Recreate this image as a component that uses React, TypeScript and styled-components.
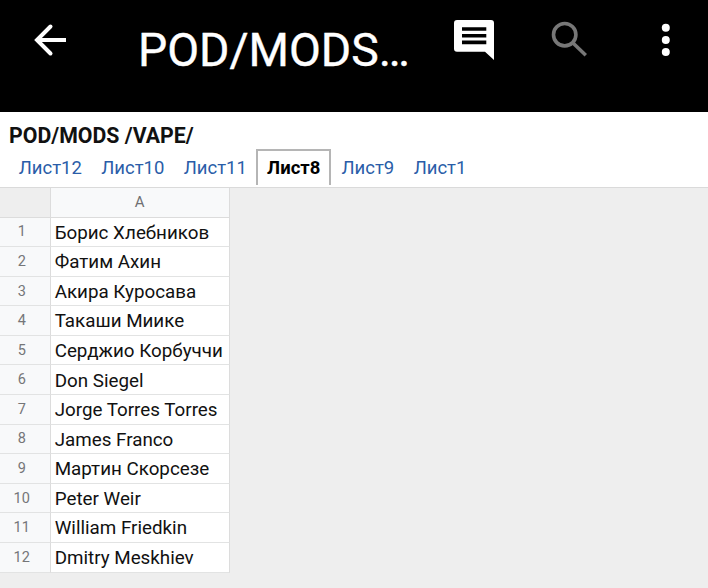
import React from "react";
import styled, { createGlobalStyle } from "styled-components";

const Global = createGlobalStyle`
  html, body { margin: 0; padding: 0; background: #fff; }
  body { font-family: Roboto, "Liberation Sans", sans-serif; }
`;
const Page = styled.div`
  width: 708px; height: 588px; overflow: hidden; display: flex; flex-direction: column; background: #eeeeee;
`;
const AppBar = styled.header`
  height: 112px; flex: none; background: #000; display: flex; align-items: flex-start; color: #fff;
`;
const IconSlot = styled.div<{ $w: number; $ml?: number }>`
  width: ${p => p.$w}px; margin-left: ${p => p.$ml ?? 0}px; height: 80px; flex: none;
  display: flex; align-items: center; justify-content: center;
`;
const Title = styled.h1`
  margin: 22px 0 0 38px; width: 316px; flex: none; font-size: 46.3px; font-weight: 400; line-height: 56px;
  white-space: nowrap; -webkit-text-stroke: 0.4px #fff;
`;
const DocHead = styled.div`
  background: #fff; flex: none; height: 76px; display: flex; flex-direction: column; border-bottom: 1px solid #dadada; box-sizing: border-box;
`;
const DocTitle = styled.div`
  font-size: 21.3px; font-weight: 700; color: #111; line-height: 24px; margin: 12px 0 0 9px;
`;
const Tabs = styled.div`
  display: flex; margin: 1px 0 0 9px; align-items: flex-start; height: 38px;
`;
const Tab = styled.div<{ $active?: boolean }>`
  height: 36px; box-sizing: border-box; padding: 1px 9.7px 0; display: flex; align-items: center; font-size: 18.5px;
  color: ${p => (p.$active ? "#000" : "#2a5da8")}; font-weight: ${p => (p.$active ? 700 : 400)};
  ${p => p.$active ? "border: 2px solid #b5b5b5; border-bottom: none; padding: 0 9px; margin: 0 0.5px 0 -0.5px;" : ""}
`;
const Sheet = styled.div`
  display: grid; grid-template-columns: 50.5px 179.5px; grid-auto-rows: 29.58px; width: 230px;
`;
const Corner = styled.div`
  background: #eeeeee; border-right: 1.5px solid #dcdcdc; border-bottom: 1.5px solid #dcdcdc;
`;
const ColHead = styled.div`
  background: #f8f9fa; color: #6f7072; font-size: 15px; display: flex; align-items: center; justify-content: center;
  border-right: 1px solid #dcdcdc; border-bottom: 1.5px solid #dcdcdc;
`;
const RowNum = styled.div`
  background: #f8f9fa; color: #757678; font-size: 14.5px; display: flex; align-items: center; justify-content: center;
  border-right: 1.5px solid #dcdcdc; border-bottom: 1.5px solid #e2e3e3; padding: 0 6px 0 0; box-sizing: border-box;
`;
const Cell = styled.div`
  background: #fff; color: #111; font-size: 18.8px; display: flex; align-items: center; padding: 1.5px 0 0 4.2px;
  border-right: 1px solid #dcdcdc; border-bottom: 1.5px solid #e2e3e3; white-space: nowrap; box-sizing: border-box; overflow: hidden;
`;

const tabs = ["Лист12", "Лист10", "Лист11", "Лист8", "Лист9", "Лист1"];
const names = ["Борис Хлебников", "Фатим Ахин", "Акира Куросава", "Такаши Миике", "Серджио Корбуччи", "Don Siegel", "Jorge Torres Torres", "James Franco", "Мартин Скорсезе", "Peter Weir", "William Friedkin", "Dmitry Meskhiev"];

export default function App() {
  return (
    <Page>
      <Global />
      <AppBar>
        <IconSlot $w={100}>
          <svg width="100" height="80" viewBox="0 0 100 80" fill="none" stroke="#fff" strokeWidth="4">
            <path d="M66 40H38" />
            <path d="M50.500 26.500 37 40 50.500 53.500" strokeLinecap="round" />
          </svg>
        </IconSlot>
        <Title>POD/MODS…</Title>
        <IconSlot $w={40}>
          <svg width="40" height="40" viewBox="454 20 40 40">
            <path fill="#fff" d="M457 20h34a3 3 0 0 1 3 3v37l-9-8.300h-28a3 3 0 0 1-3-3V23a3 3 0 0 1 3-3Z" />
            <path fill="#000" d="M462 27.300h24.300v3.400H462zM462 34h24.300v3.400H462zM462 40.600h24.300v3.700H462z" />
          </svg>
        </IconSlot>
        <IconSlot $w={36} $ml={57}>
          <svg width="36" height="38" viewBox="551 21 36 38" fill="none" stroke="#777" strokeWidth="3.6">
            <circle cx="564.700" cy="34.700" r="11.200" />
            <path d="m573 43 12.800 12.300" />
          </svg>
        </IconSlot>
        <IconSlot $w={10} $ml={74}>
          <svg width="10" height="36" viewBox="661 22 10 36" fill="#fff">
            <circle cx="665.800" cy="27.800" r="4" /><circle cx="665.800" cy="40" r="4" /><circle cx="665.800" cy="52" r="4" />
          </svg>
        </IconSlot>
      </AppBar>
      <DocHead>
        <DocTitle>POD/MODS /VAPE/</DocTitle>
        <Tabs>{tabs.map(t => <Tab key={t} $active={t === "Лист8"}>{t}</Tab>)}</Tabs>
      </DocHead>
      <Sheet>
        <Corner />
        <ColHead>A</ColHead>
        {names.map((n, i) => (
          <React.Fragment key={n}>
            <RowNum>{i + 1}</RowNum>
            <Cell>{n}</Cell>
          </React.Fragment>
        ))}
      </Sheet>
    </Page>
  );
}
